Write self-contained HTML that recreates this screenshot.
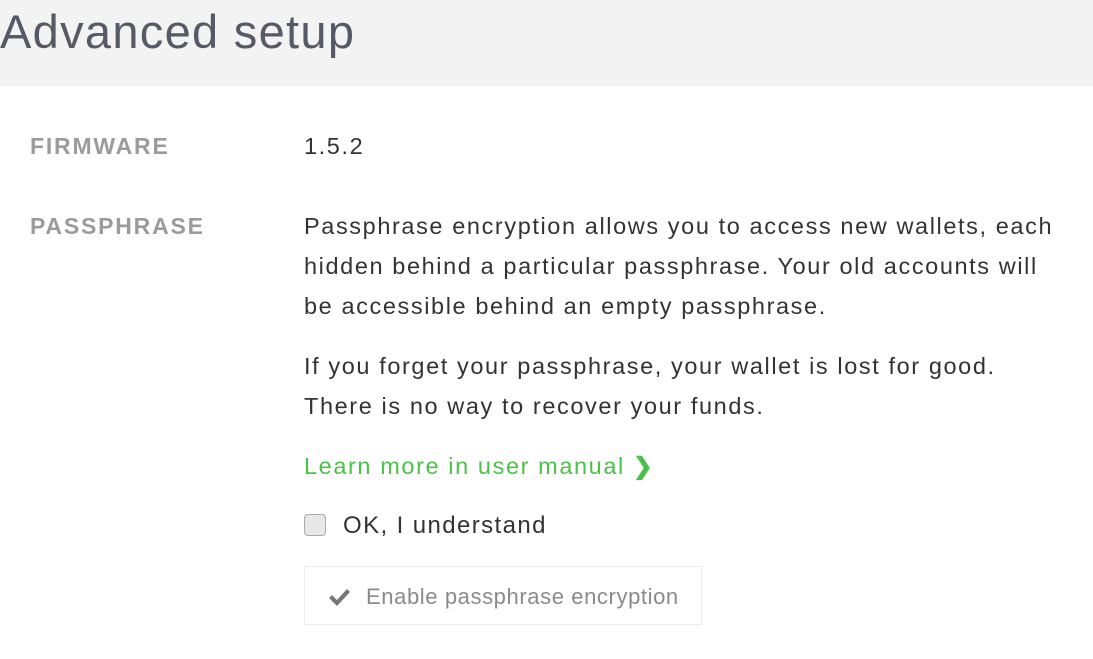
<!DOCTYPE html>
<html><head><style>
body{margin:0;width:1093px;height:659px;background:#fff;font-family:"Liberation Sans",sans-serif;overflow:hidden;position:relative}
.hdr{position:absolute;left:0;top:0;width:1093px;height:86px;background:#f3f3f3}
.hdr h1{margin:0;position:absolute;left:0;top:2px;font-weight:normal;font-size:47px;letter-spacing:1.3px;line-height:60px;color:#565a66}
.lbl{position:absolute;left:30px;font-weight:bold;font-size:23px;letter-spacing:1.8px;color:#9b9b9b;line-height:40px}
.txt{position:absolute;left:304px;font-size:23.5px;letter-spacing:1.6px;color:#333;line-height:40px;width:785px;white-space:nowrap}
.btn{position:absolute;left:304px;top:566px;width:398px;height:59px;border:1px solid #ececec;box-sizing:border-box;color:#8a8a8a;font-size:22px;letter-spacing:0.6px;line-height:59px}
.cb{position:absolute;left:304px;top:514px;width:22px;height:22px;border:1px solid #aaa;border-radius:4px;background:#e8e8e8;box-sizing:border-box}
</style></head><body>
<div class="hdr"><h1>Advanced setup</h1></div>
<div class="lbl" style="top:126px">FIRMWARE</div>
<div class="txt" style="top:126px">1.5.2</div>
<div class="lbl" style="top:206px">PASSPHRASE</div>
<div class="txt" style="top:206px">Passphrase encryption allows you to access new wallets, each<br>hidden behind a particular passphrase. Your old accounts will<br>be accessible behind an empty passphrase.</div>
<div class="txt" style="top:346px">If you forget your passphrase, your wallet is lost for good.<br>There is no way to recover your funds.</div>
<div class="txt" style="top:446px;color:#4cc148">Learn more in user manual <b>&#x276F;</b></div>
<div class="cb"></div>
<div class="txt" style="top:506px;left:343px;font-size:24px;letter-spacing:1.4px">OK, I understand</div>
<div class="btn"><svg style="position:absolute;left:22px;top:20px" width="24" height="20" viewBox="0 0 24 20"><path d="M2 11l3-3 5 5L20 2l3 3L10 19z" fill="#777"/></svg><span style="position:absolute;left:61px">Enable passphrase encryption</span></div>
</body></html>
